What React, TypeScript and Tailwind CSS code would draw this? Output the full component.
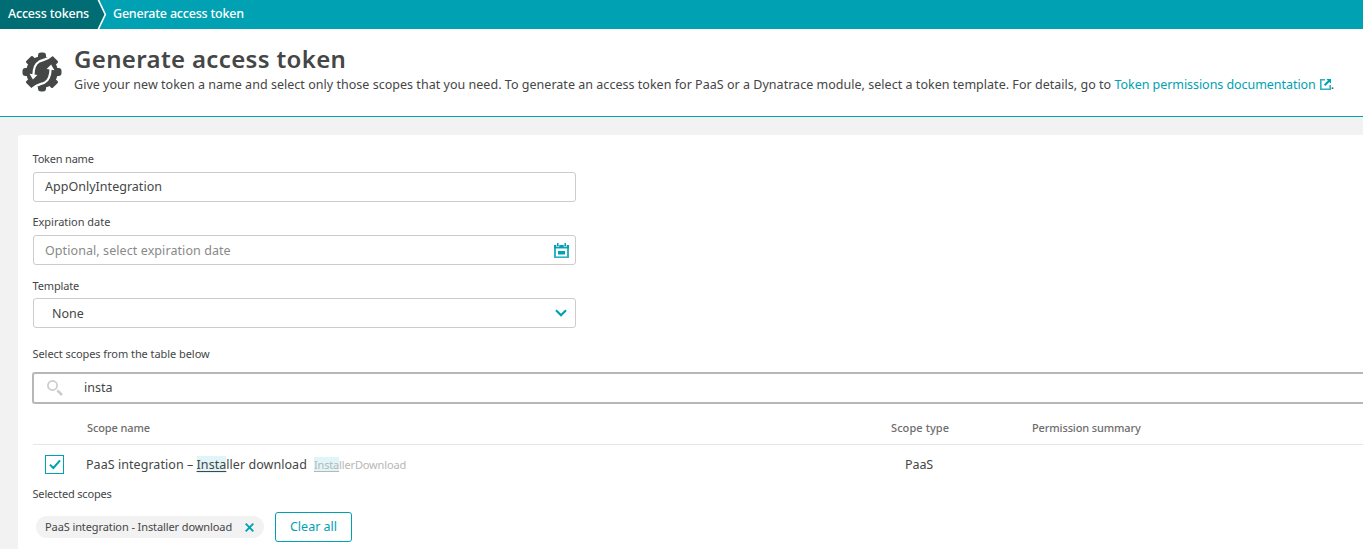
import type { ReactNode } from 'react';

function Breadcrumbs() {
  return (
    <nav className="flex h-[29px] items-stretch bg-[#00a1b2] text-[12.5px] font-medium text-white">
      <a className="flex w-[97px] items-center bg-[#006d75] pb-px pl-2 tracking-[-0.2px] whitespace-nowrap">Access tokens</a>
      <svg className="h-[29px] w-[16px] shrink-0" viewBox="0 0 16 29">
        <path d="M0 0H1.5L8.3 14.5L1.5 29H0Z" fill="#006d75" />
        <path d="M1.2 -0.5L8.3 14.5L1.2 29.5" fill="none" stroke="#fff" strokeWidth="1.6" />
      </svg>
      <span className="flex items-center pb-px tracking-[-0.2px] whitespace-nowrap">Generate access token</span>
    </nav>
  );
}

function GearIcon() {
  return (
    <svg className="h-10 w-10 shrink-0" viewBox="0 0 40 40">
      <g fill="#454646">
        <circle cx="20" cy="20" r="15.8" />
        <rect x="16" y="0.5" width="8" height="39" rx="3" />
        <rect x="16" y="0.5" width="8" height="39" rx="3" transform="rotate(90 20 20)" />
        <rect x="15.4" y="1.2" width="9.2" height="37.6" rx="1.2" transform="rotate(45 20 20)" />
        <rect x="15.4" y="1.2" width="9.2" height="37.6" rx="1.2" transform="rotate(-45 20 20)" />
      </g>
      <g fill="none" stroke="#fff" strokeWidth="2.2">
        <path d="M31 2.5C26 7.5 21.5 7.6 17.2 9.6C13 11.8 11.6 15.5 11.4 23" />
        <path d="M9 37.5C14 32.5 18.5 32.4 22.8 30.4C27 28.2 28.4 24.5 28.6 17" />
      </g>
      <path d="M7.6 21.8L15.4 23L10.9 27.4Z" fill="#fff" />
      <path d="M32.4 18.2L24.6 17L29.1 12.6Z" fill="#fff" />
    </svg>
  );
}

function ExternalLinkIcon() {
  return (
    <svg className="ml-1 inline-block h-[11px] w-[11px] align-[-1px]" viewBox="0 0 11 11">
      <path d="M5 0.8H0.8V10.2H10.2V6" fill="none" stroke="#2db3c1" strokeWidth="1.6" />
      <path d="M6.3 0H11V4.7L9.4 3.1L5.4 7.1L3.9 5.6L7.9 1.6Z" fill="#00a1b2" />
    </svg>
  );
}

function CalendarIcon() {
  return (
    <svg className="h-[15px] w-[15px]" viewBox="0 0 15 15">
      <path d="M0 2H15V15H0Z" fill="#2db3c1" />
      <path d="M0 2H15V5.5H0Z" fill="#00a1b2" />
      <path d="M2 5.5H13V13.4H2Z" fill="#fff" />
      <path d="M4 8H11V11.5H4Z" fill="#00a1b2" />
      <path d="M2.6 0V3.6H4.9V0M10.1 0V3.6H12.4V0" fill="none" stroke="#fff" strokeWidth="0.8" />
      <path d="M3 0H4.5V3.2H3ZM10.5 0H12V3.2H10.5Z" fill="#00a1b2" />
    </svg>
  );
}

function Label({ children, className }: { children: ReactNode; className: string }) {
  return <div className={`-ml-px flex h-4 items-center pl-[0.5px] text-[11px] whitespace-nowrap ${className}`}>{children}</div>;
}

function Field({ children, className }: { children: ReactNode; className: string }) {
  return (
    <div className={`flex h-[30px] w-[543px] items-center justify-between rounded-[3px] border border-[#ccc] text-[12.5px] ${className}`}>
      {children}
    </div>
  );
}

function Mark({ children }: { children: ReactNode }) {
  return <span className="bg-[#e0f5f8] underline underline-offset-2">{children}</span>;
}

export default function App() {
  return (
    <div className="flex h-[549px] w-full flex-col overflow-hidden bg-[#f2f2f2] font-['Noto_Sans','Open_Sans',sans-serif] text-[#454646]">
      <Breadcrumbs />
      <header className="flex h-[88px] shrink-0 gap-3 border-b border-[#00a1b2] bg-white pt-[23px] pl-[22px]">
        <GearIcon />
        <div className="-mt-[9px]">
          <h1 className="h-[33px] text-[24px] leading-8 font-semibold tracking-[0.35px]">Generate access token</h1>
          <p className="text-[12.5px] leading-[18px] tracking-[0.026px] whitespace-nowrap">
            Give your new token a name and select only those scopes that you need. To generate an access token for PaaS or a Dynatrace module, select a token template. For details, go to{' '}
            <a className="tracking-[-0.05px] text-[#00a1b2]">
              Token permissions documentation
              <ExternalLinkIcon />
            </a>
            .
          </p>
        </div>
      </header>

      <main className="mt-[18px] ml-[18px] flex grow flex-col rounded-tl-[3px] bg-white pt-4 pl-[15px]">
        <Label className="tracking-[-0.2px]">Token name</Label>
        <Field className="mt-[5px] pl-[11px]">
          <span className="tracking-[0.02px]">AppOnlyIntegration</span>
        </Field>

        <Label className="mt-[12px] tracking-[-0.03px]">Expiration date</Label>
        <Field className="mt-[5px] pr-[6px] pl-[11px]">
          <span className="pt-[2px] tracking-[0.08px] text-[#898989]">Optional, select expiration date</span>
          <CalendarIcon />
        </Field>

        <Label className="mt-[13px] tracking-[-0.15px]">Template</Label>
        <Field className="mt-1 pr-[8px] pl-[18px]">
          <span className="pt-[2px]">None</span>
          <svg className="h-[8px] w-[12px]" viewBox="0 0 12 8">
            <path d="M1 1.2L6 6.2L11 1.2" fill="none" stroke="#00a1b2" strokeWidth="2.2" />
          </svg>
        </Field>

        <Label className="mt-[18px] tracking-[-0.06px]">Select scopes from the table below</Label>
        <div className="mt-[10px] -ml-px flex h-8 items-center rounded-l-[3px] border-2 border-r-0 border-[#b7b7b7] pl-[13px] text-[12.5px]">
          <svg className="h-4 w-4" viewBox="0 0 16 16" fill="none" stroke="#ccc">
            <circle cx="5.5" cy="5.5" r="4.6" strokeWidth="1.7" />
            <path d="M10.3 10.3L15 15" strokeWidth="2.5" />
          </svg>
          <span className="ml-[21px]">insta</span>
        </div>

        <div className="flex h-[41px] shrink-0 items-center border-b border-[#e6e6e6] pt-[9px] pl-[54px] text-[11px] font-medium whitespace-nowrap text-[#6d6d6d]">
          <span className="w-[804px] tracking-[-0.1px]">Scope name</span>
          <span className="w-[141px] tracking-[0.08px]">Scope type</span>
          <span className="tracking-[-0.13px]">Permission summary</span>
        </div>
        <div className="flex h-[39px] shrink-0 items-center pl-3 text-[12.5px] whitespace-nowrap">
          <span className="flex h-[19px] w-[19px] items-center justify-center border border-[#00a1b2]">
            <svg className="h-[11px] w-[12px]" viewBox="0 0 12 11">
              <path d="M1 5.8L4.4 9L11 1.4" fill="none" stroke="#00a1b2" strokeWidth="2" />
            </svg>
          </span>
          <div className="flex w-[841px] items-baseline pt-[2px] pl-[22px]">
            <span className="tracking-[0.05px]">
              PaaS integration – <Mark>Insta</Mark>ller download
            </span>
            <span className="ml-[7px] text-[11px] tracking-[-0.15px] text-[#b7b7b7]">
              <Mark>Insta</Mark>llerDownload
            </span>
          </div>
          <span className="pt-[2px] tracking-[-0.1px]">PaaS</span>
        </div>

        <Label className="mt-[2px] tracking-[-0.18px]">Selected scopes</Label>
        <div className="mt-[10px] flex items-center gap-[11px] pl-[3px]">
          <span className="flex h-[22px] w-[228px] items-center justify-between rounded-full bg-[#f2f2f2] pr-[10px] pl-[9px] text-[11px] tracking-[-0.1px] whitespace-nowrap">
            PaaS integration - Installer download
            <svg className="h-[9px] w-[9px]" viewBox="0 0 9 9">
              <path d="M0.7 0.7L8.3 8.3M8.3 0.7L0.7 8.3" stroke="#00a1b2" strokeWidth="1.9" />
            </svg>
          </span>
          <button className="h-[30px] w-[77px] rounded-[3px] border border-[#00a1b2] text-[12.5px] text-[#00a1b2]">Clear all</button>
        </div>
      </main>
    </div>
  );
}
